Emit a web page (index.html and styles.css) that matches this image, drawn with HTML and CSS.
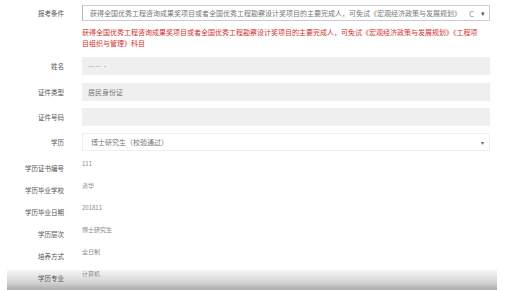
FILE: index.html
```html
<!DOCTYPE html>
<html lang="zh">
<head>
<meta charset="utf-8">
<link rel="stylesheet" href="styles.css">
</head>
<body>
<div class="form">
  <div class="row r-cond">
    <div class="label">报考条件</div>
    <div class="select bordered">
      <span class="sel-text">获得全国优秀工程咨询成果奖项目或者全国优秀工程勘察设计奖项目的主要完成人，可免试《宏观经济政策与发展规划》</span>
      <span class="sel-c">C</span>
      <span class="caret">▾</span>
    </div>
  </div>
  <div class="row r-note">
    <div class="label"></div>
    <div class="note">获得全国优秀工程咨询成果奖项目或者全国优秀工程勘察设计奖项目的主要完成人，可免试《宏观经济政策与发展规划》《工程项目组织与管理》科目</div>
  </div>
  <div class="row r-input r-name">
    <div class="label">姓名</div>
    <div class="input grey"><span class="blur">一一·</span></div>
  </div>
  <div class="row r-input r-type">
    <div class="label">证件类型</div>
    <div class="input grey">居民身份证</div>
  </div>
  <div class="row r-input r-id">
    <div class="label">证件号码</div>
    <div class="input grey"></div>
  </div>
  <div class="row r-input r-edu">
    <div class="label">学历</div>
    <div class="select light">
      <span class="sel-text">博士研究生（校验通过）</span>
      <span class="caret small">▾</span>
    </div>
  </div>
  <div class="row r-text first">
    <div class="label">学历证书编号</div>
    <div class="value">111</div>
  </div>
  <div class="row r-text">
    <div class="label">学历毕业学校</div>
    <div class="value">清华</div>
  </div>
  <div class="row r-text">
    <div class="label">学历毕业日期</div>
    <div class="value">201811</div>
  </div>
  <div class="row r-text">
    <div class="label">学历层次</div>
    <div class="value">博士研究生</div>
  </div>
  <div class="row r-text">
    <div class="label">培养方式</div>
    <div class="value">全日制</div>
  </div>
  <div class="row r-text shade">
    <div class="label">学历专业</div>
    <div class="value">计算机</div>
  </div>
</div>
</body>
</html>
```

FILE: styles.css
```css
html, body {
  margin: 0;
  padding: 0;
  background: #ffffff;
}
body {
  width: 507px;
  height: 290px;
  overflow: hidden;
  font-family: "Noto Sans CJK SC", "Noto Sans", sans-serif;
  color: #666;
}
.form {
  display: flex;
  flex-direction: column;
  padding-top: 5px;
}
.row {
  display: grid;
  grid-template-columns: 64px 408px;
  column-gap: 18px;
  align-items: center;
}
.label {
  text-align: right;
  font-size: 6.5px;
  line-height: 11px;
  color: #555;
  white-space: nowrap;
}
.select, .input {
  box-sizing: border-box;
  display: flex;
  align-items: center;
  font-size: 7px;
  color: #777;
  white-space: nowrap;
  overflow: hidden;
}
.bordered {
  height: 16px;
  border: 1px solid #c9ced4;
  border-left-color: #aab8c4;
  padding-left: 7px;
  padding-right: 4px;
}
.sel-text {
  flex: 1;
  overflow: hidden;
}
.sel-c {
  color: #999;
  font-size: 8px;
  margin-right: 7px;
}
.caret {
  font-size: 7px;
  color: #555;
}
.caret.small {
  font-size: 6px;
  color: #666;
  margin-right: 3px;
}
.r-note {
  margin-top: 6px;
}
.note {
  font-size: 7px;
  line-height: 11px;
  color: #d0312d;
  width: 402px;
}
.r-input .input, .r-input .select {
  height: 18px;
}
.grey {
  background: #efeff0;
  padding-left: 6px;
}
.r-name { margin-top: 8px; }
.r-type { margin-top: 8px; }
.r-id { margin-top: 7px; }
.r-edu { margin-top: 7px; }
.blur {
  color: #aaa;
  font-size: 6px;
  letter-spacing: 1px;
}
.light {
  border: 1px solid #eeeeee;
  padding-left: 8px;
  padding-right: 2px;
  color: #777;
}
.r-text {
  height: 22px;
  align-items: start;
}
.r-text.first {
  margin-top: 7px;
}
.r-text .label {
  padding-top: 5px;
}
.value {
  font-size: 6px;
  line-height: 11px;
  color: #888;
}
.shade {
  margin-top: 2px;
  margin-left: 7px;
  width: 490px;
  grid-template-columns: 57px 408px;
  background: linear-gradient(to bottom, #f6f6f6 0%, #d6d6d6 55%, #a0a0a0 100%);
}
.shade .label {
  padding-top: 3px;
}
.shade .value {
  margin-top: -2px;
}
```
